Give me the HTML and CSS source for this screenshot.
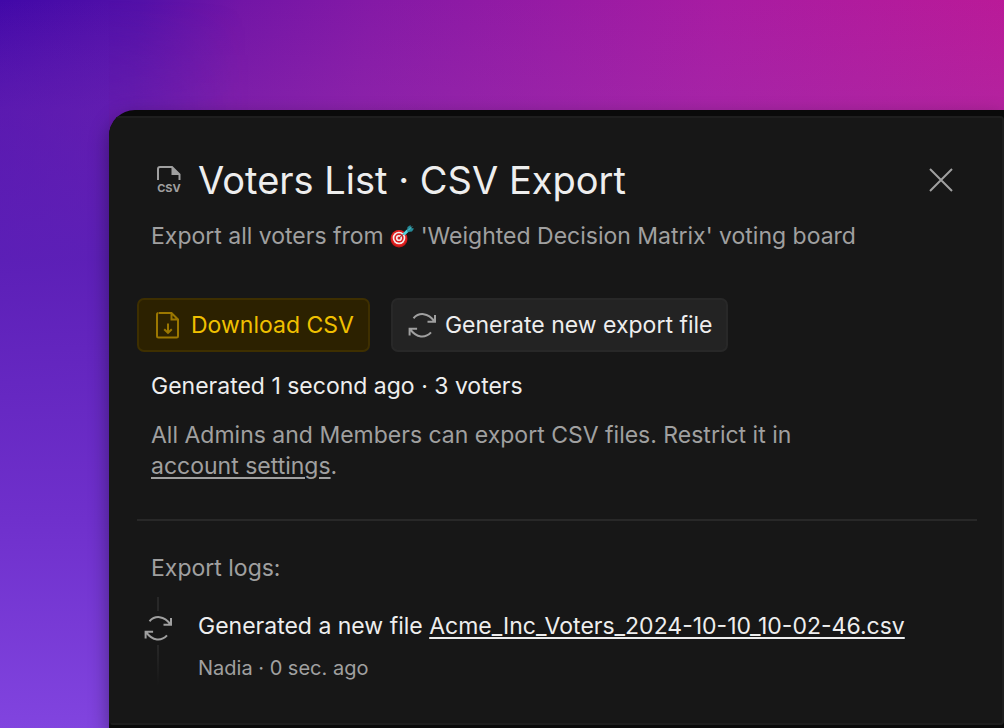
FILE: index.html
```html
<!DOCTYPE html>
<html lang="en">
<head>
  <meta charset="UTF-8">
  <meta name="viewport" content="width=device-width, initial-scale=1.0">
  <title>Voters List · CSV Export</title>
  <link rel="stylesheet" href="styles.css">
</head>
<body>
  <!-- Shared icons -->
  <svg class="sprite" aria-hidden="true">
    <symbol id="icon-refresh" viewBox="0 0 28 28">
      <path d="M5.5 7.2C11 1.3 20 1.3 26.5 10.4M27 4v6.8h-7.5M23 21.4C17.500 27.300 8.500 27.300 2.100 18.200M1.600 24.600V17.800h7.500"/>
    </symbol>
  </svg>

  <div class="window">
    <main class="modal">
      <div class="modal-header">
        <svg class="icon-csv" viewBox="0 0 28 32" aria-hidden="true">
          <path d="M3 16V5q0-2 2-2h12l7.500 7.500V16"/>
          <path class="fold" d="M16.500 2.500 25 11h-8.500z"/>
          <text x="14" y="28" text-anchor="middle">CSV</text>
        </svg>
        <h1>Voters List · CSV Export</h1>
        <button class="close-btn" type="button" aria-label="Close">
          <svg viewBox="0 0 28 28"><path d="M3 3l22 22M25 3l-22 22"/></svg>
        </button>
      </div>
      <p class="subtitle">Export all voters from
        <svg class="icon-target" viewBox="0 0 24 24" role="img" aria-label="target">
          <circle cx="9" cy="14" r="8.500" fill="#c01818"/>
          <circle cx="9" cy="13" r="8" fill="#e0201f"/>
          <circle cx="9" cy="13" r="6.300" fill="#f3eeee"/>
          <circle cx="9" cy="13" r="4.700" fill="#dc2020"/>
          <circle cx="9" cy="13" r="3.100" fill="#f3eeee"/>
          <circle cx="9" cy="13" r="1.500" fill="#dc2020"/>
          <path d="M9 13l7-6" stroke="#7b3535" stroke-width="1"/>
          <path d="M13.500 9.500l5-4.500" stroke="#4fd3dc" stroke-width="3"/>
          <path d="M17 6l.5-4 3-2 .5 3 3 .5-2 3-4 .5z" fill="#258b99"/>
          <path d="M18 5.500l4-4" stroke="#55c6cf" stroke-width="1"/>
        </svg>
        'Weighted Decision Matrix' voting board</p>

      <div class="actions">
        <button class="btn btn-primary" type="button">
          <svg viewBox="0 0 28 28" aria-hidden="true">
            <path d="M5 2h12.500l6.500 6.500V25q0 1.500-1.500 1.500h-18Q3 26.500 3 25V3.500Q3 2 4.500 2M17.500 2v6.500H24M14 12.500v9.200M10.200 18.200l3.800 3.600 3.800-3.600"/>
          </svg>
          <span>Download CSV</span>
        </button>
        <button class="btn" type="button">
          <svg aria-hidden="true"><use href="#icon-refresh"/></svg>
          <span>Generate new export file</span>
        </button>
      </div>

      <p class="status">Generated 1 second ago · 3 voters</p>
      <p class="note">All Admins and Members can export CSV files. Restrict it in <a href="#">account settings</a>.</p>

      <hr>

      <h2>Export logs:</h2>
      <ul class="logs">
        <li class="log">
          <div class="timeline">
            <span class="line"></span>
            <svg aria-hidden="true"><use href="#icon-refresh"/></svg>
            <span class="line line-end"></span>
          </div>
          <div class="log-body">
            <p>Generated a new file <a href="#">Acme_Inc_Voters_2024-10-10_10-02-46.csv</a></p>
            <p class="log-meta">Nadia · 0 sec. ago</p>
          </div>
        </li>
      </ul>
    </main>
  </div>
</body>
</html>
```
FILE: styles.css
```css
/* === GENERAL === */
* {
  box-sizing: border-box;
}
body {
  margin: 0;
  min-height: 100vh;
  display: flex;
  flex-direction: column;
  padding: 110px 0 0 109px;
  font-family: Inter, sans-serif;
  font-size: 23px;
  font-weight: 400;
  font-optical-sizing: none;
  line-height: 32px;
  color: #eeeeee;
  background:
    linear-gradient(to bottom, rgba(92, 32, 184, 0), rgba(92, 32, 184, 0.9) 260px, #6f30cc 520px, #8144df 728px) 0 0 / 109px 100% no-repeat,
    linear-gradient(to bottom, rgba(160, 60, 180, 0), rgba(160, 60, 180, 0.25) 110px),
    linear-gradient(96deg, #4108a8 0, #5310a8 140px, #7215a6 240px, #8419a6 370px, #981ba4 560px, #a81ca2 720px, #ba1a98 1004px);
  background-blend-mode: normal;
}
/* Softens the left strip into the rest of the backdrop */
body::before {
  content: "";
  position: absolute;
  top: 0;
  left: 109px;
  width: 140px;
  height: 110px;
  background: linear-gradient(to right, rgba(92, 32, 184, 0.2), rgba(92, 32, 184, 0));
  mask-image: linear-gradient(to bottom, transparent, #000);
}
h1, h2, p, ul {
  margin: 0;
  padding: 0;
  font-weight: 400;
}
a {
  color: inherit;
  text-decoration-thickness: 2px;
  text-underline-offset: 3px;
}
svg {
  flex-shrink: 0;
  fill: none;
  stroke: #a0a0a0;
  stroke-width: 2;
}
.sprite {
  position: absolute;
  width: 0;
  height: 0;
}

/* === WINDOW & MODAL === */
.window {
  position: relative;
  flex: 1;
  padding: 6px 0 3px;
  background-color: #0a0a0a;
  border-top-left-radius: 26px;
  overflow: hidden;
  box-shadow: 0 8px 20px rgba(0, 0, 0, 0.4);
}
.modal {
  padding: 38px 25px 38px 26px;
  background-color: #171717;
  border: 2px solid #1e1e1e;
  border-left-color: #171717;
  border-radius: 4px;
}
.modal-header {
  display: flex;
  align-items: center;
  padding: 0 22px 0 18px;
}
h1 {
  flex: 1;
  margin-left: 15px;
  font-size: 38px;
  line-height: 48px;
}
.icon-csv {
  width: 28px;
  height: 32px;
}
.icon-csv .fold {
  fill: #a0a0a0;
  stroke: none;
}
.icon-csv text {
  font-size: 11px;
  font-weight: 700;
  fill: #a0a0a0;
  stroke: none;
}
.close-btn {
  display: flex;
  padding: 0;
  background: none;
  border: none;
  cursor: pointer;
}
.close-btn svg {
  width: 28px;
  height: 28px;
}
.subtitle {
  margin-top: 16px;
  padding: 0 14px;
  color: #a0a0a0;
}
.icon-target {
  width: 24px;
  height: 24px;
  vertical-align: -5px;
  stroke: none;
}

/* === BUTTONS === */
.actions {
  display: flex;
  gap: 21px;
  margin-top: 46px;
}
.btn {
  display: flex;
  align-items: center;
  gap: 9px;
  height: 54px;
  padding: 0 14px 0 15px;
  font: inherit;
  font-optical-sizing: none;
  color: #eeeeee;
  background-color: #232323;
  border: 2px solid #282828;
  border-radius: 7px;
  cursor: pointer;
}
.btn svg {
  width: 28px;
  height: 28px;
}
.btn-primary {
  color: #f0c000;
  background-color: #2c2100;
  border-color: #3e2f00;
}
.btn-primary svg {
  stroke: #9b7700;
}

/* === TEXT === */
.status {
  margin-top: 18px;
  padding: 0 14px;
}
.note {
  max-width: 720px;
  margin-top: 18px;
  padding: 0 14px;
  line-height: 31px;
  color: #a0a0a0;
}
hr {
  height: 2px;
  margin: 37px 0 31px;
  border: none;
  background-color: #282828;
}
h2 {
  padding: 0 14px;
  font-size: 23px;
  color: #a0a0a0;
}

/* === EXPORT LOGS === */
.logs {
  margin-top: 13px;
  list-style: none;
}
.log {
  display: flex;
  gap: 26px;
  padding-left: 7px;
}
.timeline {
  display: flex;
  flex-direction: column;
  align-items: center;
  gap: 3px;
}
.timeline svg {
  width: 28px;
  height: 28px;
}
.line {
  width: 2px;
  height: 14px;
  background-color: #282828;
}
.line-end {
  flex: 1;
  background: linear-gradient(#282828, #171717);
}
.log-body {
  padding: 13px 0 1px;
}
.log-meta {
  margin-top: 10px;
  font-size: 20px;
  color: #a0a0a0;
}
```
